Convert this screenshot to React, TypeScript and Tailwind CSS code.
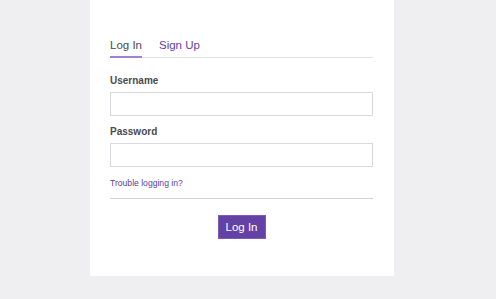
import React from "react";

export default function App() {
  return (
    <div className="h-[299px] w-full bg-[#efeff1] font-['Liberation_Sans',Arial,sans-serif]">
      <div className="ml-[90px] flex h-[276px] w-[304px] flex-col bg-white pl-[20px] pr-[21px] pt-[38px]">
        <div className="flex items-end border-b border-[#e3e3e6]">
          <div className="-mb-px border-b-2 border-[#9d82d6] pb-[4px] text-[11.5px] leading-[14px] text-[#4b4b4f]">
            Log In
          </div>
          <div className="ml-[17px] pb-[5px] text-[11.5px] leading-[14px] text-[#6441a5]">
            Sign Up
          </div>
        </div>

        <label className="mt-[17px] text-[10px] font-bold leading-[12px] text-[#4b4b4f]">
          Username
        </label>
        <input
          type="text"
          className="mt-[5px] h-[24px] w-full border border-[#dad8de] bg-white outline-none"
        />

        <label className="mt-[10px] text-[10px] font-bold leading-[12px] text-[#4b4b4f]">
          Password
        </label>
        <input
          type="password"
          className="mt-[5px] h-[24px] w-full border border-[#dad8de] bg-white outline-none"
        />

        <a className="mt-[11px] text-[8.6px] leading-[11px] text-[#5c3d99]">
          Trouble logging in?
        </a>

        <div className="mt-[9px] border-t border-[#d3d3d6]" />

        <div className="mt-[16px] flex justify-center">
          <button className="flex h-[24px] w-[48px] items-center justify-center border border-[#7d5bbe] bg-[#6441a5] text-[11.5px] leading-[14px] text-white">
            Log In
          </button>
        </div>
      </div>
    </div>
  );
}
